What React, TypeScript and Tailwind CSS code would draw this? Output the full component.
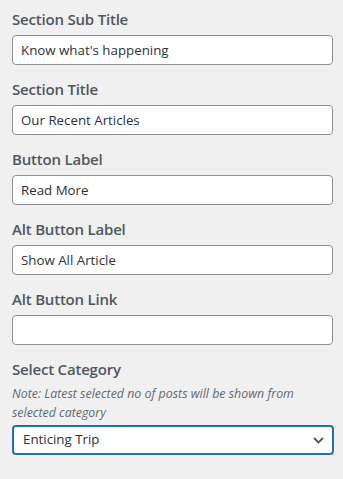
import React from "react";

const font = { fontFamily: '"Open Sans", "Noto Sans", Arial, sans-serif' };

function Field({ label, value }: { label: string; value: string }) {
  return (
    <div className="flex flex-col">
      <label className="text-[15px] leading-[20px] font-semibold tracking-[-0.2px] text-[#50575e]">{label}</label>
      <input
        readOnly
        value={value}
        className="mt-[6px] h-[30px] w-[321px] rounded-[4px] border border-[#8c8f94] bg-white px-[8px] text-[13.3px] text-[#2c3338] outline-none"
      />
    </div>
  );
}

export default function App() {
  return (
    <div className="min-h-[479px] w-[343px] bg-[#f0f0f0] pl-[12px] pt-[9px]" style={font}>
      <div className="flex flex-col gap-[14px]">
        <Field label="Section Sub Title" value="Know what's happening" />
        <Field label="Section Title" value="Our Recent Articles" />
        <Field label="Button Label" value="Read More" />
        <Field label="Alt Button Label" value="Show All Article" />
        <Field label="Alt Button Link" value="" />
        <div className="flex flex-col">
          <label className="text-[15px] leading-[20px] font-semibold tracking-[-0.2px] text-[#50575e]">Select Category</label>
          <p className="mt-[5px] w-[321px] text-[12.4px] leading-[19px] italic text-[#646970]">
            Note: Latest selected no of posts will be shown from selected category
          </p>
          <div className="relative mt-[3px] flex h-[30px] w-[322px] items-center rounded-[4px] border-2 border-[#2271b1] bg-white pl-[9px] text-[13.3px] text-[#2c3338]">
            Enticing Trip
            <svg className="absolute right-[8px] top-[10px]" width="11" height="7" viewBox="0 0 11 7" fill="none">
              <path d="M1 1l4.5 4.5L10 1" stroke="#50575e" strokeWidth="1.8" />
            </svg>
          </div>
        </div>
      </div>
    </div>
  );
}
